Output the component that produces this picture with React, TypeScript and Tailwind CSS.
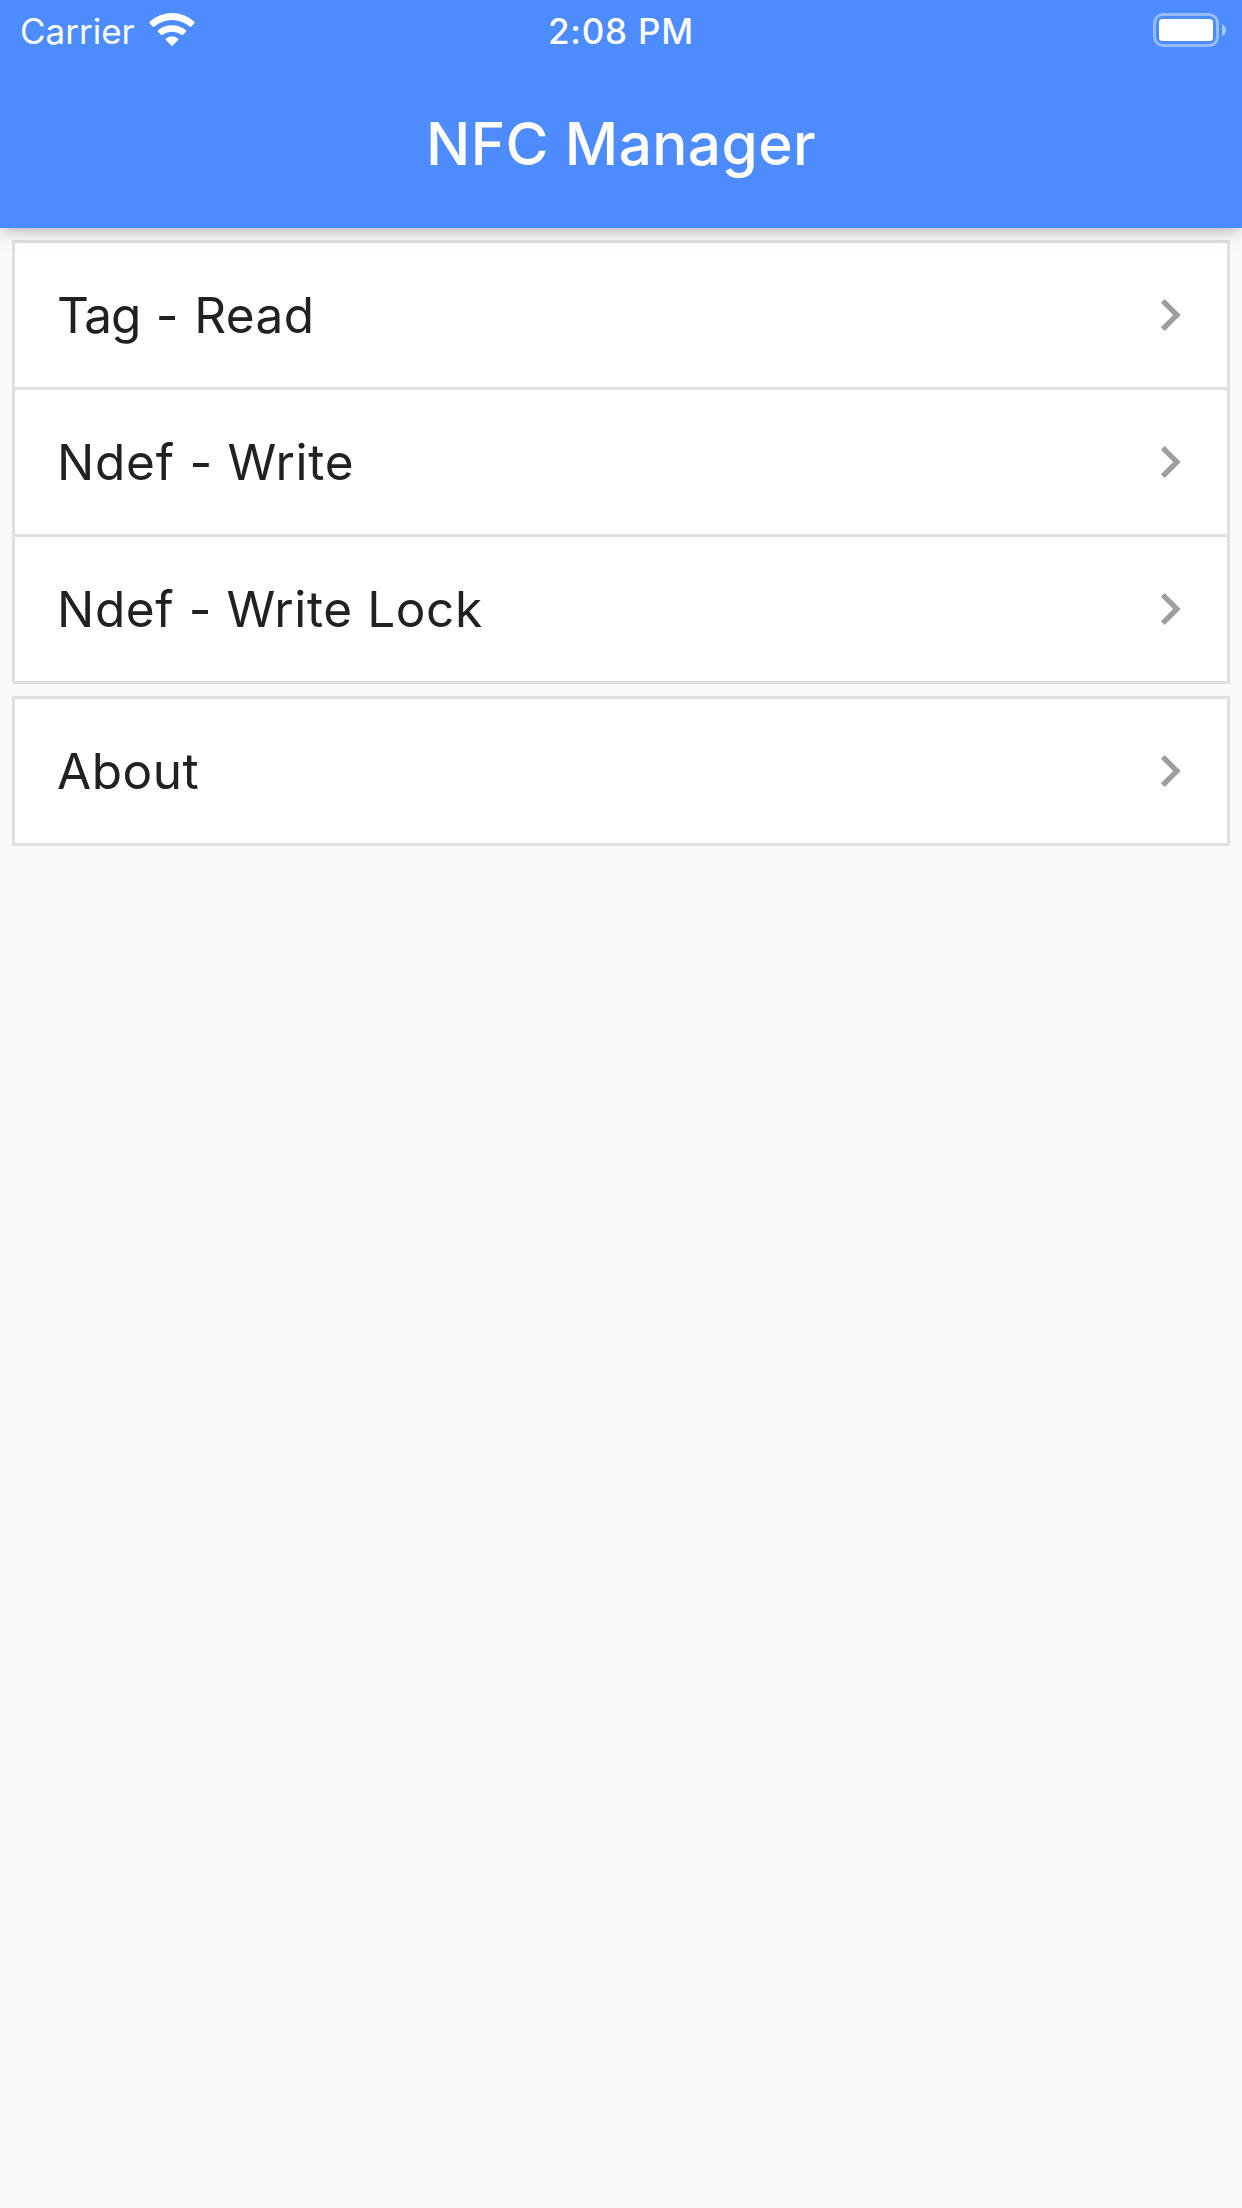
import type { ReactNode } from "react";

function WifiIcon() {
  return (
    <svg className="block h-[33px] w-[46px]" viewBox="0 0 46 33" fill="#fff">
      <path d="M.8 10.4Q-.2 9.4.8 8.6A33 33 0 0 1 45.2 8.6Q46.2 9.4 45.2 10.4L42.4 13.6Q41.6 14.4 40.6 13.6A27 27 0 0 0 5.4 13.6Q4.4 14.4 3.6 13.6Z" />
      <path d="M9 18.8Q8.2 17.9 9 17.2A22 22 0 0 1 37 17.2Q37.8 17.9 37 18.8L34 21.8Q33.2 22.5 32.3 21.8A16 16 0 0 0 13.7 21.8Q12.8 22.5 12 21.8Z" />
      <path d="M16.9 27Q16.1 26.1 17 25.4A10.5 10.5 0 0 1 29 25.4Q29.9 26.1 29.1 27L23.8 32.4Q23 33.2 22.2 32.4Z" />
    </svg>
  );
}

function BatteryIcon() {
  return (
    <svg className="block h-[34px] w-[74px]" viewBox="0 0 74 34">
      <rect x="1.5" y="1.5" width="63" height="31" rx="8.5" fill="none" stroke="#fff" strokeOpacity=".42" strokeWidth="3" />
      <rect x="6" y="6" width="54" height="22" rx="3.5" fill="#fff" />
      <path d="M69 11Q73 13 73 17T69 23Z" fill="#fff" fillOpacity=".5" />
    </svg>
  );
}

function ChevronRight() {
  return (
    <svg className="block size-16" viewBox="0 0 24 24" fill="#9e9e9e">
      <path d="M10 6 8.59 7.41 13.17 12l-4.58 4.59L10 18l6-6z" />
    </svg>
  );
}

function Row({ children, className }: { children: ReactNode; className: string }) {
  return (
    <button className="block w-full text-left">
      <span className="flex h-[144px] items-center justify-between pr-[25px]">
        <span className={`whitespace-pre text-[49.5px] leading-[60px] text-[#212121] ${className}`}>{children}</span>
        <ChevronRight />
      </span>
    </button>
  );
}

export default function App() {
  return (
    <div className="min-h-[2208px] w-full bg-[#fafafa] font-[Inter,sans-serif]">
      <header className="relative z-10 h-[228px] bg-[#4d8cfe] text-white shadow-[0_6px_12px_-3px_rgba(0,0,0,0.2),0_3px_24px_0px_rgba(0,0,0,0.1)]">
        <div className="grid h-[60px] grid-cols-[1fr_auto_1fr] items-start pr-[15px] pl-5">
          <div className="flex items-start">
            <span className="mt-[10px] text-[35px] leading-[42px]">Carrier</span>
            <span className="mt-[13px] ml-[14px]">
              <WifiIcon />
            </span>
          </div>
          <span className="mt-[10px] mr-[5px] text-[35px] leading-[42px] font-[550] tracking-[0.8px]">2:08 PM</span>
          <span className="mt-[13px] justify-self-end">
            <BatteryIcon />
          </span>
        </div>
        <h1 className="flex h-[168px] items-center justify-center text-[58.5px] font-[550] tracking-[0.4px]">NFC Manager</h1>
      </header>
      <main className="flex flex-col gap-3 p-3">
        <section className="divide-y-3 divide-[#e0e0e0] border-3 border-[#e0e0e0] bg-white">
          <Row className="pl-[42px] tracking-[0.4px] [word-spacing:1px]">
            <span className="tracking-[-1px]">Tag</span> - Read
          </Row>
          <Row className="pl-[42px] tracking-[0.74px]">Ndef - Write</Row>
          <Row className="pl-[42px] tracking-[0.6px]">Ndef - Write Lock</Row>
        </section>
        <section className="border-3 border-[#e0e0e0] bg-white">
          <Row className="pl-[42px] tracking-[0.5px]">About</Row>
        </section>
      </main>
    </div>
  );
}
